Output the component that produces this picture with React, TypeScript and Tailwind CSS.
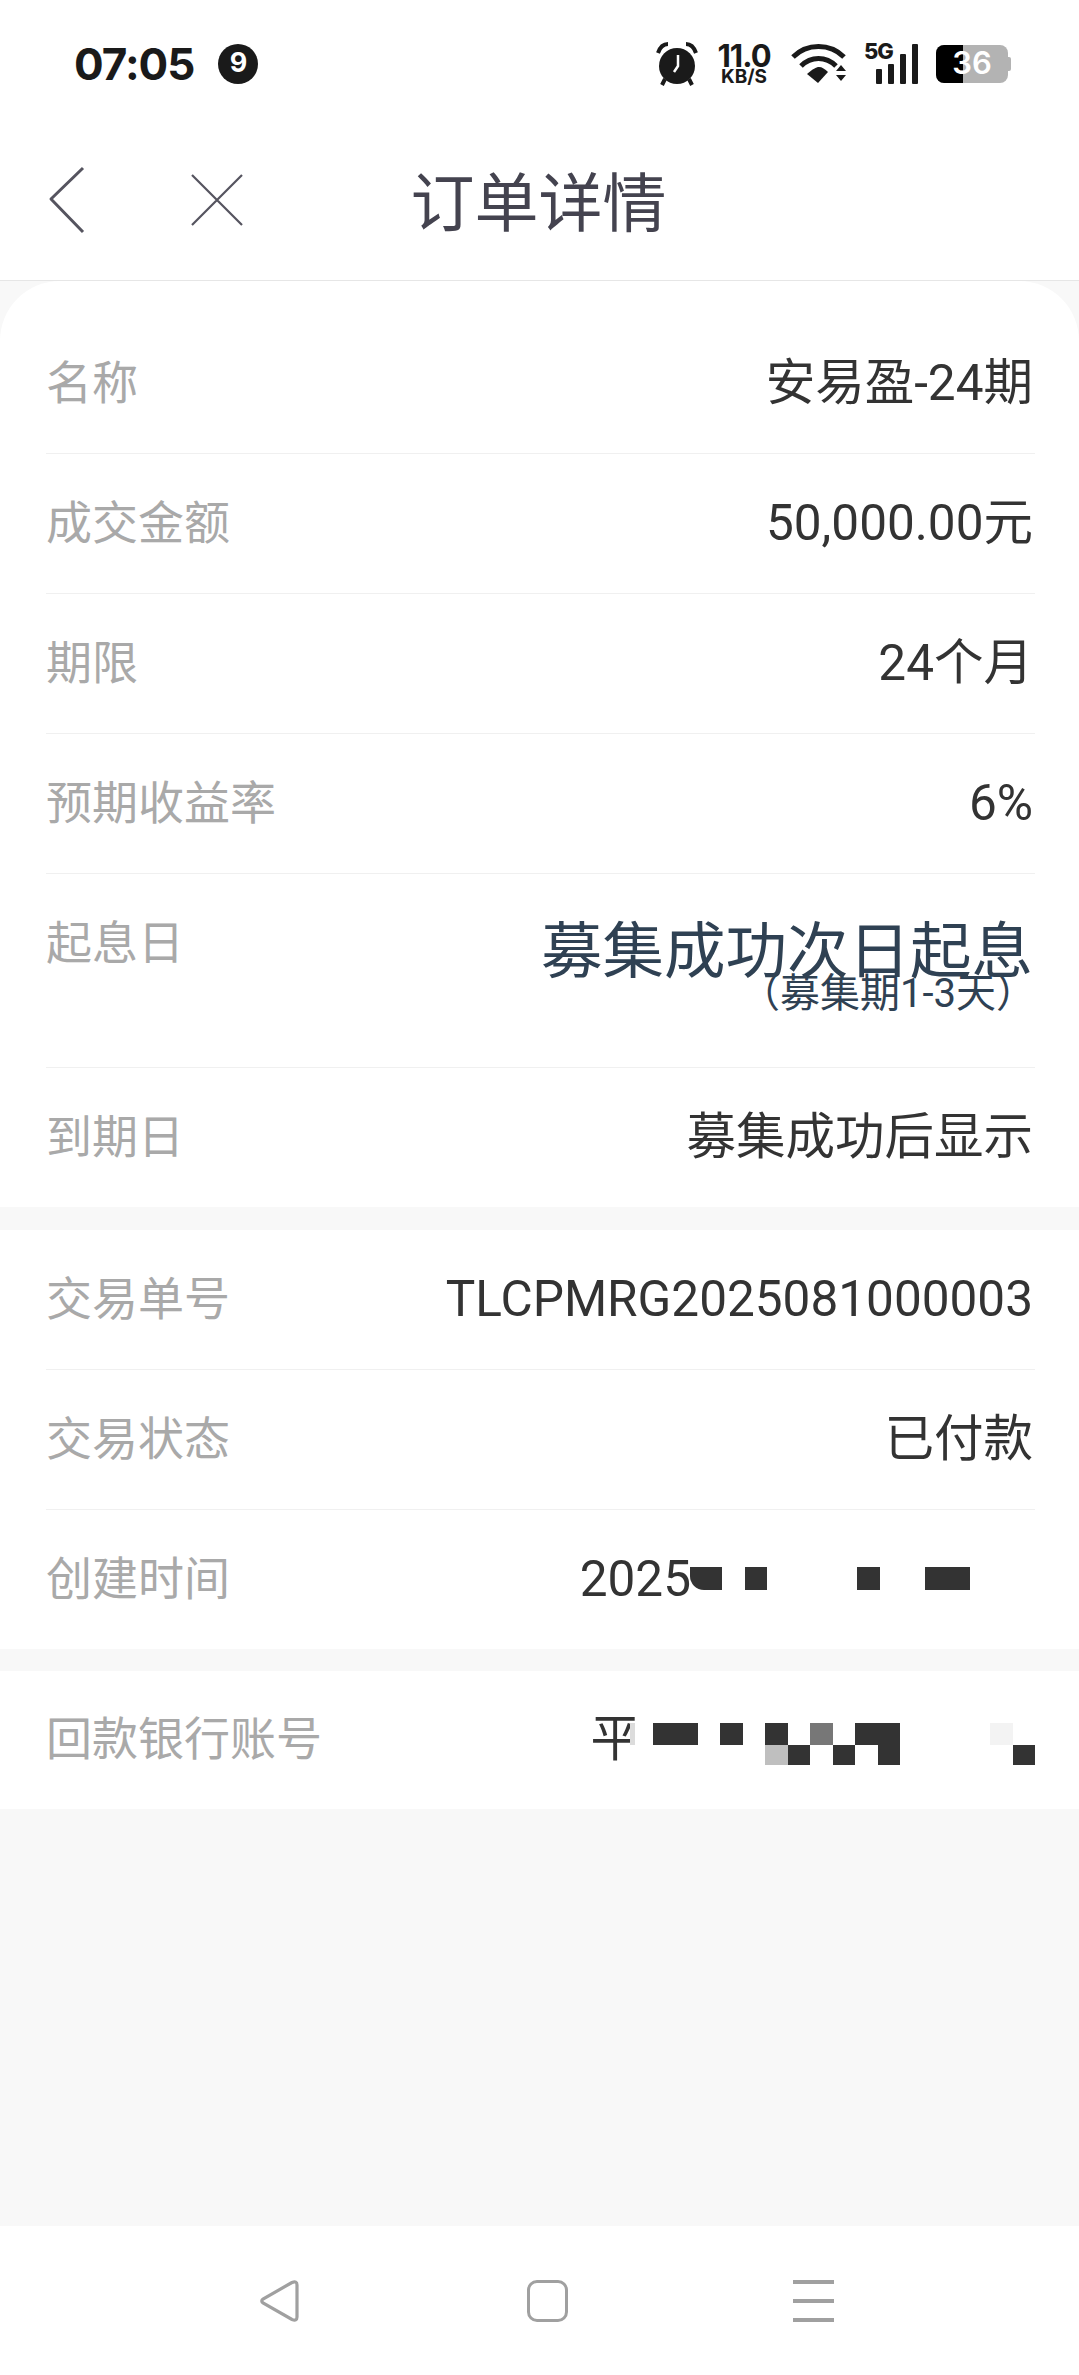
const rowBorder = 'border-b border-[#f0f0f0]'

function Row({ label, value, last }: { label: string; value: React.ReactNode; last?: boolean }) {
  return (
    <div className={`flex items-center justify-between pb-[2px] ${last ? 'h-[139px]' : `h-[140px] ${rowBorder}`}`}>
      <span className="text-[46px] leading-[52px] text-[#a9a9a9]">{label}</span>
      <div className="mr-[2px] flex items-center text-[49.5px] leading-[52px] text-[#333333]">{value}</div>
    </div>
  )
}

function StatusBar() {
  return (
    <div className="flex h-[125px] items-center justify-between pt-[2px] pr-[68px] pl-[74px]">
      <div className="flex items-center">
        <span className="font-['Inter',sans-serif] text-[44px] font-bold tracking-[-1px] text-[#1a1a1a]">07:05</span>
        <span className="ml-[24px] flex h-[40px] w-[40px] items-center justify-center rounded-full bg-[#1a1a1a] font-['Inter',sans-serif] text-[27px] font-bold text-white">
          9
        </span>
      </div>
      <div className="flex items-center">
        <svg width="42" height="44" viewBox="0 0 42 44" className="ml-[2px] text-[#1a1a1a]">
          <circle cx="21" cy="24" r="18" fill="currentColor" />
          <path d="M22 13v11l-4 6" fill="none" stroke="white" strokeWidth="2.5" />
          <path d="M2 11C4 5 8 2 12 2M40 11C38 5 34 2 30 2" fill="none" stroke="currentColor" strokeWidth="4" />
          <path d="M9 37l-3 6M33 37l3 6" stroke="currentColor" strokeWidth="4" />
        </svg>
        <div className="ml-[19px] flex w-[54px] flex-col items-center font-['Inter',sans-serif] font-bold text-[#1a1a1a]">
          <span className="text-[31px] leading-[26px] tracking-[-1px]">11.0</span>
          <span className="text-[19px] leading-[16px]">KB/S</span>
        </div>
        <svg width="56" height="40" viewBox="0 0 56 40" className="ml-[20px] text-[#1a1a1a]">
          <path d="M2 13C16 -1 39 -1 53 13" fill="none" stroke="currentColor" strokeWidth="5" />
          <path d="M10 22C20 12 35 12 45 22" fill="none" stroke="currentColor" strokeWidth="5" />
          <path d="M16 30C22 25 25 23 28 23C31 23 34 25 37 28L27 39Z" fill="currentColor" />
          <path d="M45 27l5-6 5 6zM45 31h10l-5 6z" fill="currentColor" />
        </svg>
        <div className="relative ml-[17px] flex h-[41px] w-[54px] items-end justify-end gap-[6px]">
          <span className="absolute top-[-3px] left-0 font-['Inter',sans-serif] text-[22px] leading-[22px] font-extrabold tracking-[-1px] text-[#1a1a1a]">5G</span>
          <span className="h-[15px] w-[6px] rounded-[1px] bg-[#1a1a1a]" />
          <span className="h-[20px] w-[6px] rounded-[1px] bg-[#1a1a1a]" />
          <span className="h-[30px] w-[6px] rounded-[1px] bg-[#1a1a1a]" />
          <span className="h-[40px] w-[6px] rounded-[1px] bg-[#1a1a1a]" />
        </div>
        <div className="ml-[18px] flex items-center">
          <div className="relative flex h-[38px] w-[72px] items-center justify-center overflow-hidden rounded-[8px] bg-[#b3b3b3]">
            <span className="absolute top-0 bottom-0 left-0 w-[27px] bg-black" />
            <span className="relative font-['Inter',sans-serif] text-[31px] font-semibold text-white">36</span>
          </div>
          <span className="h-[14px] w-[3px] rounded-r-[2px] bg-[#b3b3b3]" />
        </div>
      </div>
    </div>
  )
}

function Header() {
  return (
    <div className="relative flex h-[156px] items-center justify-center border-b border-[#e6e6e6]">
      <svg width="44" height="68" viewBox="0 0 44 68" className="absolute top-[41px] left-[46px] text-[#55545f]" fill="none" stroke="currentColor" strokeWidth="3" strokeLinejoin="round">
        <path d="M37 2L5 33l32 33" />
      </svg>
      <svg width="54" height="54" viewBox="0 0 54 54" className="absolute top-[48px] left-[190px] text-[#55545f]" fill="none" stroke="currentColor" strokeWidth="2.2">
        <path d="M2 2l50 50M52 2L2 52" />
      </svg>
      <span className="mt-[4px] ml-[-2px] text-[64px] text-[#44434f]">订单详情</span>
    </div>
  )
}

// redacted pixels over the date
function DateMosaic() {
  return (
    <div className="ml-[-1px] flex h-[23px] items-center">
      <span className="h-[23px] w-[32px] rounded-bl-[14px] bg-[#333333]" />
      <span className="ml-[23px] h-[23px] w-[22px] bg-[#333333]" />
      <span className="ml-[90px] h-[23px] w-[23px] bg-[#333333]" />
      <span className="ml-[45px] h-[23px] w-[45px] bg-[#333333]" />
      <span className="w-[63px]" />
    </div>
  )
}

const bankTop = [
  'w-[5px] bg-[#dcdcdc]',
  'w-[18px] bg-white',
  'w-[45px] bg-[#333333]',
  'w-[22px] bg-transparent',
  'w-[23px] bg-[#333333]',
  'w-[22px] bg-transparent',
  'w-[23px] bg-[#333333]',
  'w-[22px] bg-transparent',
  'w-[23px] bg-[#777777]',
  'w-[22px] bg-transparent',
  'w-[45px] bg-[#333333]',
  'w-[90px] bg-transparent',
  'w-[23px] bg-[#f3f3f3]',
]
const bankBottom = [
  'w-[23px] bg-white',
  'w-[112px] bg-transparent',
  'w-[23px] bg-[#bfbfbf]',
  'w-[22px] bg-[#333333]',
  'w-[23px] bg-transparent',
  'w-[22px] bg-[#333333]',
  'w-[23px] bg-transparent',
  'w-[22px] bg-[#333333]',
  'w-[113px] bg-transparent',
  'w-[22px] bg-[#333333]',
]

function BankMosaic() {
  return (
    <div className="ml-[-10px] flex translate-y-[5px] flex-col">
      <div className="flex h-[22px]">
        {bankTop.map((cls, i) => (
          <span key={i} className={cls} />
        ))}
      </div>
      <div className="flex h-[20px]">
        {bankBottom.map((cls, i) => (
          <span key={i} className={cls} />
        ))}
      </div>
    </div>
  )
}

function NavBar() {
  return (
    <div className="flex h-[149px] items-center bg-white pl-[259px]">
      <svg width="41" height="44" viewBox="0 0 41 44" fill="none" stroke="#a0a0a0" strokeWidth="3.2">
        <path d="M33 3.5L4 20Q1.500 22 4 24L33 40.500Q38 42.500 38 38V6Q38 1.500 33 3.500Z" />
      </svg>
      <span className="ml-[227px] h-[42px] w-[41px] rounded-[10px] border-[3px] border-[#a0a0a0]" />
      <div className="ml-[225px] flex h-[42px] w-[41px] flex-col justify-between">
        <span className="h-[4px] bg-[#a0a0a0]" />
        <span className="h-[4px] bg-[#a0a0a0]" />
        <span className="h-[4px] bg-[#a0a0a0]" />
      </div>
    </div>
  )
}

export default function App() {
  return (
    <div className="flex h-[2375px] flex-col overflow-hidden bg-white font-['Roboto','Noto_Sans_CJK_SC',sans-serif]">
      <StatusBar />
      <Header />
      <div className="flex flex-1 flex-col bg-[#f8f8f8]">
        <div className="rounded-t-[60px] bg-white pt-[33px] pr-[44px] pl-[46px]">
          <Row label="名称" value="安易盈-24期" />
          <Row label="成交金额" value="50,000.00元" />
          <Row label="期限" value="24个月" />
          <Row label="预期收益率" value="6%" />
          <div className={`flex h-[194px] justify-between pt-[43px] ${rowBorder}`}>
            <span className="text-[46px] leading-[52px] text-[#a9a9a9]">起息日</span>
            <div className="mr-[2px] flex flex-col items-end text-[#2f4153]">
              <span className="text-[61.5px] leading-[70px]">募集成功次日起息</span>
              <span className="mt-[-15px] mr-[-3px] text-[40px] leading-[44px]">（募集期1-3天）</span>
            </div>
          </div>
          <Row label="到期日" value="募集成功后显示" last />
        </div>
        <div className="mt-[23px] bg-white pr-[44px] pl-[46px]">
          <Row label="交易单号" value="TLCPMRG2025081000003" />
          <Row label="交易状态" value="已付款" />
          <Row label="创建时间" value={<>2025<DateMosaic /></>} last />
        </div>
        <div className="mt-[22px] bg-white pr-[44px] pl-[46px]">
          <div className="flex h-[138px] items-center justify-between pb-[2px]">
            <span className="text-[46px] leading-[52px] text-[#a9a9a9]">回款银行账号</span>
            <div className="flex items-center text-[49.5px] leading-[52px] text-[#333333]">
              平
              <BankMosaic />
            </div>
          </div>
        </div>
      </div>
      <NavBar />
    </div>
  )
}
